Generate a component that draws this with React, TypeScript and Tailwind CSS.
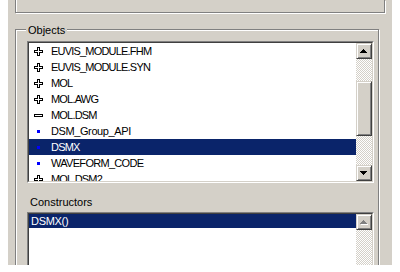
const objects = [
  { name: 'EUVIS_MODULE.FHM', icon: 'plus', track: 'tracking-[-0.8px]' },
  { name: 'EUVIS_MODULE.SYN', icon: 'plus', track: 'tracking-[-0.8px]' },
  { name: 'MOL', icon: 'plus', track: 'tracking-[-0.8px]' },
  { name: 'MOL.AWG', icon: 'plus', track: 'tracking-[-0.8px]' },
  { name: 'MOL.DSM', icon: 'minus', track: 'tracking-[-0.8px]' },
  { name: 'DSM_Group_API', icon: 'dot', track: 'tracking-[-0.4px]' },
  { name: 'DSMX', icon: 'dot', track: 'tracking-[-0.8px]', selected: true },
  { name: 'WAVEFORM_CODE', icon: 'dot', track: 'tracking-[-0.7px]' },
  { name: 'MOL.DSM2', icon: 'plus', track: 'tracking-[-0.8px]' },
]

function NodeIcon({ kind }: { kind: string }) {
  if (kind === 'plus') {
    return (
      <svg width="9" height="9" viewBox="0 0 9 9" shapeRendering="crispEdges">
        <path d="M3.5 0.5h2v3h3v2h-3v3h-2v-3h-3v-2h3z" fill="#fff" stroke="#000" />
      </svg>
    )
  }
  if (kind === 'minus') {
    return (
      <svg width="9" height="9" viewBox="0 0 9 9" shapeRendering="crispEdges">
        <rect x="0.5" y="3.5" width="8" height="2" fill="#fff" stroke="#000" />
      </svg>
    )
  }
  return <span className="block h-[3px] w-[3px] bg-[#0000ff]" />
}

function Arrow({ down, disabled }: { down?: boolean; disabled?: boolean }) {
  const d = down ? 'M0 0h7v1h-1v1h-1v1h-1v1h-1v-1h-1v-1h-1v-1h-1z' : 'M3 0h1v1h1v1h1v1h1v1H0V3h1V2h1V1h1z'
  return (
    <svg width="8" height="5" viewBox="0 0 8 5" shapeRendering="crispEdges">
      {disabled && <path d={d} fill="#fff" transform="translate(1 1)" />}
      <path d={d} fill={disabled ? '#808080' : '#000'} />
    </svg>
  )
}

function ScrollButton({ down, disabled }: { down?: boolean; disabled?: boolean }) {
  return (
    <div className="flex h-4 w-4 shrink-0 items-center justify-center border border-t-[#d4d0c8] border-l-[#d4d0c8] border-b-[#404040] border-r-[#404040] bg-[#d4d0c8] shadow-[inset_1px_1px_0_#fff,inset_-1px_-1px_0_#808080]">
      <Arrow down={down} disabled={disabled} />
    </div>
  )
}

const track = 'bg-[image:repeating-conic-gradient(#d4d0c8_0_25%,#fff_0_50%)] bg-[length:2px_2px]'

export default function App() {
  return (
    <div className="h-[272px] w-[400px] bg-white pl-[8px] font-['Liberation_Sans',Arial,sans-serif] text-[11px] text-black">
      <div className="h-[265px] w-[384px] overflow-hidden bg-[#d4d0c8]">
        <div className="ml-[7px] h-[13px] w-[370px] border border-t-0 border-[#808080] shadow-[inset_1px_0_0_#fff,1px_1px_0_#fff]" />

        <div className="ml-[7px] mt-[16px] h-[260px] w-[364px] border border-b-0 border-[#808080] shadow-[inset_1px_1px_0_#fff,1px_1px_0_#fff]">
          <div className="-mt-[6px] ml-[10px] w-fit bg-[#d4d0c8] px-[2px] leading-[13px]">Objects</div>

          <div className="ml-[11px] mt-[4px] h-[142px] w-[347px] border border-t-[#808080] border-l-[#808080] border-b-white border-r-white">
            <div className="flex h-full border border-t-[#404040] border-l-[#404040] border-b-[#d4d0c8] border-r-[#d4d0c8]">
              <div className="flex-1 overflow-hidden bg-white">
                {objects.map((o) => (
                  <div key={o.name} className={`flex h-4 items-center ${o.selected ? 'bg-[#0a246a] text-white' : ''}`}>
                    <div className="ml-[5px] flex w-[9px] justify-center">
                      <NodeIcon kind={o.icon} />
                    </div>
                    <span className={`ml-[8px] whitespace-nowrap leading-4 ${o.track}`}>{o.name}</span>
                  </div>
                ))}
              </div>
              <div className="flex w-4 flex-col">
                <ScrollButton />
                <div className={`flex flex-1 flex-col ${track}`}>
                  <div className="h-[22px]" />
                  <div className="h-[55px] border border-t-[#d4d0c8] border-l-[#d4d0c8] border-b-[#404040] border-r-[#404040] bg-[#d4d0c8] shadow-[inset_1px_1px_0_#fff,inset_-1px_-1px_0_#808080]" />
                </div>
                <ScrollButton down />
              </div>
            </div>
          </div>

          <div className="ml-[14px] mt-[13px] leading-[13px]">Constructors</div>

          <div className="ml-[11px] mt-[3px] h-[70px] w-[347px] border border-t-[#808080] border-l-[#808080] border-b-white border-r-white">
            <div className="flex h-full border border-t-[#404040] border-l-[#404040] border-b-[#d4d0c8] border-r-[#d4d0c8]">
              <div className="flex-1 bg-white">
                <div className="h-[14px] bg-[#0a246a] px-[2px] leading-[14px] tracking-[-0.3px] text-white">DSMX()</div>
              </div>
              <div className={`flex w-4 flex-col ${track}`}>
                <ScrollButton disabled />
              </div>
            </div>
          </div>
        </div>
      </div>
    </div>
  )
}
